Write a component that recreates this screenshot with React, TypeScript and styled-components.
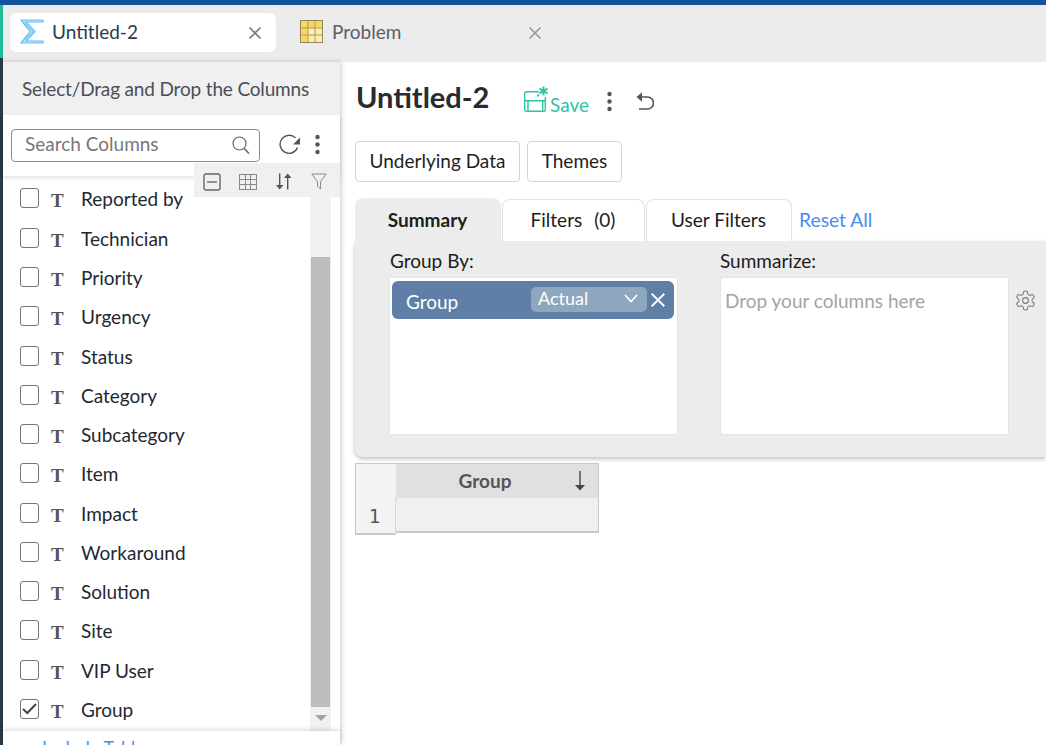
import React from "react";
import styled, { createGlobalStyle } from "styled-components";

const Global = createGlobalStyle`
  html, body { margin: 0; padding: 0; background: #fff; }
  body { font-family: Lato, "Liberation Sans", sans-serif; color: #222; overflow: hidden; }
  * { box-sizing: border-box; }
`;

const Page = styled.div`
  width: 1046px;
  height: 745px;
  display: flex;
  flex-direction: column;
  overflow: hidden;
`;
const TopBar = styled.div`
  height: 5px;
  flex: none;
  background: #12549c;
`;
const Shell = styled.div`
  flex: 1;
  display: flex;
  min-height: 0;
`;
const Rail = styled.div`
  width: 3px;
  flex: none;
  background: linear-gradient(#1dbd9a 0 53px, #2a3a4c 53px);
`;
const Content = styled.div`
  flex: 1;
  min-width: 0;
  display: flex;
  flex-direction: column;
`;
const TabBar = styled.div`
  height: 57px;
  flex: none;
  background: #ececec;
  display: flex;
  gap: 14px;
  padding: 8px 0 0 7px;
`;
const DocTab = styled.div<{ $active?: boolean }>`
  width: 266px;
  height: 39px;
  display: flex;
  align-items: center;
  padding: 0 14px 2px 10px;
  border-radius: 7px;
  background: ${(p) => (p.$active ? "#fff" : "transparent")};
  color: ${(p) => (p.$active ? "#2b3a4a" : "#5a5f66")};
  font-size: 19px;
`;
const DocTitle = styled.span<{ $ml: number }>`
  flex: 1;
  margin-left: ${(p) => p.$ml}px;
`;
const Body = styled.div`
  flex: 1;
  display: flex;
  min-height: 0;
`;
const Sidebar = styled.aside`
  position: relative;
  width: 337px;
  flex: none;
  display: flex;
  flex-direction: column;
  background: #fff;
  box-shadow: 1px 0 5px rgba(0, 0, 0, 0.22);
  z-index: 2;
`;
const SideHeader = styled.div`
  height: 53px;
  flex: none;
  display: flex;
  align-items: center;
  padding: 0 0 0 19px;
  background: #f0f0f0;
  color: #4a4f58;
  font-size: 19px;
  letter-spacing: -0.16px;
`;
const SearchRow = styled.div`
  height: 61px;
  flex: none;
  display: flex;
  align-items: flex-start;
  padding: 14px 0 0 8px;
  background: #fff;
  box-shadow: 0 2px 4px rgba(0, 0, 0, 0.12);
  z-index: 1;
`;
const SearchBox = styled.div`
  width: 249px;
  height: 33px;
  display: flex;
  align-items: center;
  justify-content: space-between;
  padding: 0 9px 4px 13px;
  border: 1px solid #8c8c8c;
  border-radius: 4px;
  color: #777;
  font-size: 19px;
`;
const IconSlot = styled.span<{ $ml?: number; $mt?: number }>`
  display: inline-flex;
  margin-left: ${(p) => p.$ml ?? 0}px;
  margin-top: ${(p) => p.$mt ?? 0}px;
`;
const ToolStrip = styled.div`
  position: absolute;
  left: 191px;
  top: 101px;
  width: 146px;
  height: 34px;
  background: #f0f0f0;
  display: flex;
  align-items: center;
  padding: 3px 0 0 9px;
  gap: 18px;
  z-index: 3;
`;
const ListArea = styled.div`
  flex: 1;
  min-height: 0;
  display: flex;
`;
const ColumnList = styled.div`
  width: 307px;
  flex: none;
  padding-top: 3.85px;
`;
const ColumnRow = styled.div`
  height: 39.27px;
  display: flex;
  align-items: center;
  padding-left: 17px;
  font-size: 19px;
  color: #1e2833;
`;
const Check = styled.span`
  width: 19px;
  height: 20px;
  flex: none;
  display: flex;
  align-items: center;
  justify-content: center;
  border: 1px solid #757575;
  border-radius: 3px;
  margin-top: -2px;
`;
const TypeT = styled.span`
  width: 13px;
  margin-left: 12px;
  margin-top: 3px;
  font-family: "Liberation Serif", serif;
  font-weight: 700;
  font-size: 19px;
  color: #555;
  line-height: 1;
`;
const ColumnName = styled.span`
  margin-left: 17px;
  margin-top: -1px;
`;
const Track = styled.div`
  width: 21px;
  flex: none;
  padding: 81px 1px 0;
  background: #f1f1f1;
  display: flex;
  flex-direction: column;
  align-items: center;
`;
const Thumb = styled.div`
  width: 19px;
  height: 450px;
  background: #bdbdbd;
`;
const TrackArrow = styled.div`
  margin-top: 8px;
  width: 0;
  height: 0;
  border-left: 6px solid transparent;
  border-right: 6px solid transparent;
  border-top: 6px solid #a3a3a3;
`;
const SideFooter = styled.div`
  height: 14px;
  flex: none;
  overflow: hidden;
  padding: 5px 0 0 39px;
  background: #fff;
  box-shadow: 0 -2px 4px rgba(0, 0, 0, 0.12);
  color: #4a8cf0;
  font-size: 18px;
  z-index: 1;
`;
const Main = styled.main`
  flex: 1;
  min-width: 0;
  padding: 18px 0 0 15px;
  background: #fff;
`;
const TitleRow = styled.div`
  height: 36px;
  display: flex;
  align-items: center;
`;
const Title = styled.h1`
  margin: -3px 0 0 0;
  font-size: 29px;
  font-weight: 700;
  color: #2a2a2e;
  width: 169px;
  padding-left: 1px;
`;
const SaveLabel = styled.span`
  color: #2ec4a6;
  font-size: 19px;
  margin: 13px 0 0 1px;
`;
const ActionRow = styled.div`
  margin-top: 25px;
  display: flex;
  gap: 7px;
`;
const ActionButton = styled.button<{ $w: number }>`
  width: ${(p) => p.$w}px;
  height: 41px;
  padding: 0 0 2px;
  background: #fff;
  border: 1px solid #ccd5ee;
  border-radius: 4px;
  font: 19px Lato, sans-serif;
  color: #1e1e1e;
`;
const TabRow = styled.div`
  margin-top: 16px;
  height: 43px;
  display: flex;
  align-items: flex-end;
`;
const PanelTab = styled.div<{ $active?: boolean; $w: number }>`
  width: ${(p) => p.$w}px;
  height: ${(p) => (p.$active ? 43 : 42)}px;
  margin-right: 1px;
  padding: ${(p) => (p.$active ? "0 1px 0 0" : "0 1px 3px 0")};
  display: flex;
  align-items: center;
  justify-content: center;
  gap: 12px;
  font-size: 19px;
  color: #1c1c1c;
  font-weight: ${(p) => (p.$active ? 700 : 400)};
  background: ${(p) => (p.$active ? "#ececec" : "#fff")};
  border: ${(p) => (p.$active ? "none" : "1px solid #e2e2e2")};
  border-bottom: none;
  border-radius: 8px 8px 0 0;
`;
const ResetLink = styled.a`
  margin: 0 0 10px 6px;
  color: #4a8cf0;
  font-size: 19.3px;
`;
const Panel = styled.section`
  height: 216px;
  background: #ececec;
  border-radius: 0 0 0 8px;
  box-shadow: 0 2px 4px rgba(0, 0, 0, 0.25);
  display: flex;
  padding: 9px 0 0 34px;
`;
const DropColumn = styled.div<{ $mr: number }>`
  width: 289px;
  margin-right: ${(p) => p.$mr}px;
  flex: none;
`;
const DropLabel = styled.div`
  height: 27px;
  padding-left: 1px;
  font-size: 19px;
  line-height: 22px;
  color: #1c1c1c;
`;
const SummarizeLabel = styled(DropLabel)`
  padding-left: 0;
`;
const DropBox = styled.div`
  height: 158px;
  padding: 3px 3px 0 2px;
  background: #fff;
  border: 1px solid #e4e4e4;
`;
const Hint = styled.div`
  padding: 8px 0 0 2px;
  font-size: 19px;
  color: #a4a4a4;
`;
const Chip = styled.div`
  height: 38px;
  display: flex;
  align-items: center;
  padding: 0 8px 0 14px;
  border-radius: 6px;
  background: #5f7fa6;
  color: #fff;
  font-size: 19px;
`;
const ChipName = styled.span`
  flex: 1;
  margin-top: 3px;
`;
const AggPill = styled.div`
  width: 116px;
  height: 25px;
  display: flex;
  align-items: center;
  justify-content: space-between;
  margin: -2px 3px 0 0;
  padding: 0 9px 2px 7px;
  border-radius: 5px;
  background: #8fa6bf;
  font-size: 18px;
`;
const GearSlot = styled.div`
  margin-top: 39px;
  margin-left: 5px;
`;
const DataGrid = styled.div`
  margin-top: 6px;
  display: grid;
  grid-template-columns: 41px 203px;
  grid-template-rows: 35px 35px;
  width: 244px;
`;
const GridCorner = styled.div`
  background: #f3f3f3;
  border: 1px solid #c8c8c8;
  border-width: 1px 0 0 1px;
`;
const GridHead = styled.div`
  background: #e0e0e0;
  border: 1px solid #c8c8c8;
  border-width: 1px 1px 0 0;
  display: flex;
  align-items: center;
  justify-content: center;
  position: relative;
  font-size: 19px;
  font-weight: 700;
  color: #555;
  padding: 0 24px 1px 0;
`;
const SortArrow = styled.span`
  position: absolute;
  right: 12px;
  top: 7px;
  display: inline-flex;
`;
const GridIndex = styled.div`
  background: #f3f3f3;
  border: 1px solid #c8c8c8;
  border-width: 0 0 2px 1px;
  border-right: 1px dotted #bbb;
  height: 37px;
  display: flex;
  align-items: center;
  justify-content: center;
  font: 19px "DejaVu Sans Mono", monospace;
  color: #555;
  padding-right: 2px;
`;
const GridCell = styled.div`
  background: #f0f0f0;
  border: 1px solid #c8c8c8;
  border-width: 0 1px 2px 0;
`;

const Sigma = () => (
  <svg width="24" height="25" viewBox="0 0 24 25">
    <path d="M1 1H23V3H6L15 12.5L6 22H23V24H1L10 12.5Z" fill="#bfe6fb" stroke="#62c1ef" strokeWidth="1.2" strokeLinejoin="miter" />
    <path d="M1 1L13 12.5L1 24" fill="none" stroke="#62c1ef" strokeWidth="1" />
  </svg>
);
const YellowGrid = () => (
  <svg width="23" height="23" viewBox="0 0 23 23">
    <rect x="0.5" y="0.5" width="22" height="22" fill="#fdeeaa" stroke="#8f8660" />
    <rect x="1" y="1" width="21" height="7" fill="#f9d65c" />
    <rect x="1" y="8" width="7" height="14" fill="#f9d65c" />
    <path d="M8 1V22M15 1V22M1 8H22M1 15H22" stroke="#a89c6a" strokeWidth="1" />
  </svg>
);
const Close = ({ c = "#7c7c7c", s = 14 }: { c?: string; s?: number }) => (
  <svg width={s} height={s} viewBox="0 0 14 14">
    <path d="M1.5 1.5L12.5 12.5M12.5 1.5L1.5 12.5" stroke={c} strokeWidth="1.7" fill="none" />
  </svg>
);
const Search = () => (
  <svg width="18" height="19" viewBox="0 0 18 19" fill="none" stroke="#666" strokeWidth="1.2">
    <circle cx="7.5" cy="7.5" r="6.5" />
    <path d="M12.3 12.5L17 17.5" strokeWidth="1.6" />
  </svg>
);
const Refresh = () => (
  <svg width="22" height="21" viewBox="0 0 22 21" fill="none">
    <path d="M18.5 13.5A9 9 0 1 1 16.5 4" stroke="#555" strokeWidth="1.4" />
    <path d="M21 3.5V10.5H14Z" fill="#555" />
  </svg>
);
const Kebab = () => (
  <svg width="5" height="21" viewBox="0 0 5 21" fill="#555">
    <circle cx="2.5" cy="3" r="2.2" />
    <circle cx="2.5" cy="10.5" r="2.2" />
    <circle cx="2.5" cy="18" r="2.2" />
  </svg>
);
const Collapse = () => (
  <svg width="18" height="18" viewBox="0 0 18 18" fill="none" stroke="#666">
    <rect x="1" y="1" width="16" height="16" rx="2" strokeWidth="1.4" />
    <path d="M4 9H14" strokeWidth="1.4" />
  </svg>
);
const GridGlyph = () => (
  <svg width="18" height="16" viewBox="0 0 18 16" fill="none" stroke="#888" strokeWidth="1">
    <path d="M0 .5H18M0 5.5H18M0 10.5H18M0 15.5H18M.5 0V16M6.5 0V16M11.5 0V16M17.5 0V16" />
  </svg>
);
const SortGlyph = () => (
  <svg width="17" height="17" viewBox="0 0 17 17" fill="#555" stroke="none">
    <path d="M4 0.5H5.4V12H8.5L4.7 16.5L1 12H4Z" />
    <path d="M12 16.5H13.4V5H16.5L12.7 .5L9 5H12Z" />
  </svg>
);
const Funnel = () => (
  <svg width="16" height="17" viewBox="0 0 16 17" fill="none" stroke="#8a8a8a" strokeWidth="1">
    <path d="M.8 1H15.2L9.5 8.5V16L6.5 13V8.5Z" />
  </svg>
);
const SaveIcon = () => (
  <svg width="25" height="27" viewBox="0 0 25 27" fill="none" stroke="#2ec4a6" strokeWidth="1.4">
    <path d="M15 6.7H2.2A1.5 1.5 0 0 0 .7 8.2V24.8A1.5 1.5 0 0 0 2.2 26.3H19.8A1.5 1.5 0 0 0 21.3 24.8V12" />
    <path d="M4 25.8V15.7H18.7V25.8M.7 15.7H21.3" />
    <path d="M13 10.5H15.2" strokeWidth="2" />
    <path d="M19.5 1.5V10.5M15.4 3.7L23.6 8.3M23.6 3.7L15.4 8.3" strokeWidth="2" />
  </svg>
);
const Undo = () => (
  <svg width="19" height="20" viewBox="0 0 19 20" fill="none" stroke="#555">
    <path d="M3 6H12.5A5.5 5.5 0 0 1 12.5 18H4" strokeWidth="1.7" />
    <path d="M7 1.2L1.5 6L7 10.8" fill="#555" strokeWidth="0" />
  </svg>
);
const Tick = () => (
  <svg width="15" height="13" viewBox="0 0 15 13" fill="none" stroke="#444" strokeWidth="2">
    <path d="M1 7L5.3 11L14 2" />
  </svg>
);
const Chevron = () => (
  <svg width="14" height="9" viewBox="0 0 14 9" fill="none" stroke="#fff" strokeWidth="1.7">
    <path d="M1 1L7 7.5L13 1" />
  </svg>
);
const Gear = () => (
  <svg width="23" height="23" viewBox="0 0 24 24" fill="none" stroke="#777" strokeWidth="1.1" strokeLinejoin="round">
    <path d="M12.2 2h-.4a2 2 0 0 0-2 2v.2a2 2 0 0 1-1 1.7l-.4.3a2 2 0 0 1-2 0l-.2-.1a2 2 0 0 0-2.7.7l-.2.4a2 2 0 0 0 .7 2.7l.2.1a2 2 0 0 1 1 1.7v.5a2 2 0 0 1-1 1.8l-.2.1a2 2 0 0 0-.7 2.7l.2.4a2 2 0 0 0 2.7.7l.2-.1a2 2 0 0 1 2 0l.4.3a2 2 0 0 1 1 1.7v.2a2 2 0 0 0 2 2h.4a2 2 0 0 0 2-2v-.2a2 2 0 0 1 1-1.7l.4-.3a2 2 0 0 1 2 0l.2.1a2 2 0 0 0 2.7-.7l.2-.4a2 2 0 0 0-.7-2.7l-.2-.1a2 2 0 0 1-1-1.7v-.5a2 2 0 0 1 1-1.8l.2-.1a2 2 0 0 0 .7-2.7l-.2-.4a2 2 0 0 0-2.7-.7l-.2.1a2 2 0 0 1-2 0l-.4-.3a2 2 0 0 1-1-1.7V4a2 2 0 0 0-2-2z" />
    <circle cx="12" cy="12" r="3" />
  </svg>
);
const ArrowDown = () => (
  <svg width="12" height="20" viewBox="0 0 12 20" fill="#444">
    <path d="M5.3 0H6.7V14H11L6 19.5L1 14H5.3Z" />
  </svg>
);

const columns = [
  "Reported by", "Technician", "Priority", "Urgency", "Status", "Category", "Subcategory",
  "Item", "Impact", "Workaround", "Solution", "Site", "VIP User", "Group",
];

export default function App() {
  return (
    <Page>
      <Global />
      <TopBar />
      <Shell>
        <Rail />
        <Content>
          <TabBar>
            <DocTab $active>
              <Sigma />
              <DocTitle $ml={8}>Untitled-2</DocTitle>
              <IconSlot $mt={2}><Close /></IconSlot>
            </DocTab>
            <DocTab>
              <YellowGrid />
              <DocTitle $ml={9}>Problem</DocTitle>
              <IconSlot $mt={2}><Close c="#9a9a9a" /></IconSlot>
            </DocTab>
          </TabBar>
          <Body>
            <Sidebar>
              <SideHeader>Select/Drag and Drop the Columns</SideHeader>
              <SearchRow>
                <SearchBox>
                  <span>Search Columns</span>
                  <IconSlot $mt={4}><Search /></IconSlot>
                </SearchBox>
                <IconSlot $ml={19} $mt={5}><Refresh /></IconSlot>
                <IconSlot $ml={14} $mt={5}><Kebab /></IconSlot>
              </SearchRow>
              <ToolStrip>
                <Collapse />
                <GridGlyph />
                <SortGlyph />
                <IconSlot $ml={1}><Funnel /></IconSlot>
              </ToolStrip>
              <ListArea>
                <ColumnList>
                  {columns.map((c) => (
                    <ColumnRow key={c}>
                      <Check>{c === "Group" && <Tick />}</Check>
                      <TypeT>T</TypeT>
                      <ColumnName>{c}</ColumnName>
                    </ColumnRow>
                  ))}
                </ColumnList>
                <Track>
                  <Thumb />
                  <TrackArrow />
                </Track>
              </ListArea>
              <SideFooter>Include Table</SideFooter>
            </Sidebar>
            <Main>
              <TitleRow>
                <Title>Untitled-2</Title>
                <SaveIcon />
                <SaveLabel>Save</SaveLabel>
                <IconSlot $ml={18} $mt={6}><Kebab /></IconSlot>
                <IconSlot $ml={23} $mt={5}><Undo /></IconSlot>
              </TitleRow>
              <ActionRow>
                <ActionButton $w={165}>Underlying Data</ActionButton>
                <ActionButton $w={95}>Themes</ActionButton>
              </ActionRow>
              <TabRow>
                <PanelTab $active $w={146}>Summary</PanelTab>
                <PanelTab $w={143}><span>Filters</span><span>(0)</span></PanelTab>
                <PanelTab $w={146}>User Filters</PanelTab>
                <ResetLink>Reset All</ResetLink>
              </TabRow>
              <Panel>
                <DropColumn $mr={42}>
                  <DropLabel>Group By:</DropLabel>
                  <DropBox>
                    <Chip>
                      <ChipName>Group</ChipName>
                      <AggPill>
                        <span>Actual</span>
                        <Chevron />
                      </AggPill>
                      <Close c="#fff" s={16} />
                    </Chip>
                  </DropBox>
                </DropColumn>
                <DropColumn $mr={0}>
                  <SummarizeLabel>Summarize:</SummarizeLabel>
                  <DropBox>
                    <Hint>Drop your columns here</Hint>
                  </DropBox>
                </DropColumn>
                <GearSlot><Gear /></GearSlot>
              </Panel>
              <DataGrid>
                <GridCorner />
                <GridHead>
                  Group
                  <SortArrow><ArrowDown /></SortArrow>
                </GridHead>
                <GridIndex>1</GridIndex>
                <GridCell />
              </DataGrid>
            </Main>
          </Body>
        </Content>
      </Shell>
    </Page>
  );
}
